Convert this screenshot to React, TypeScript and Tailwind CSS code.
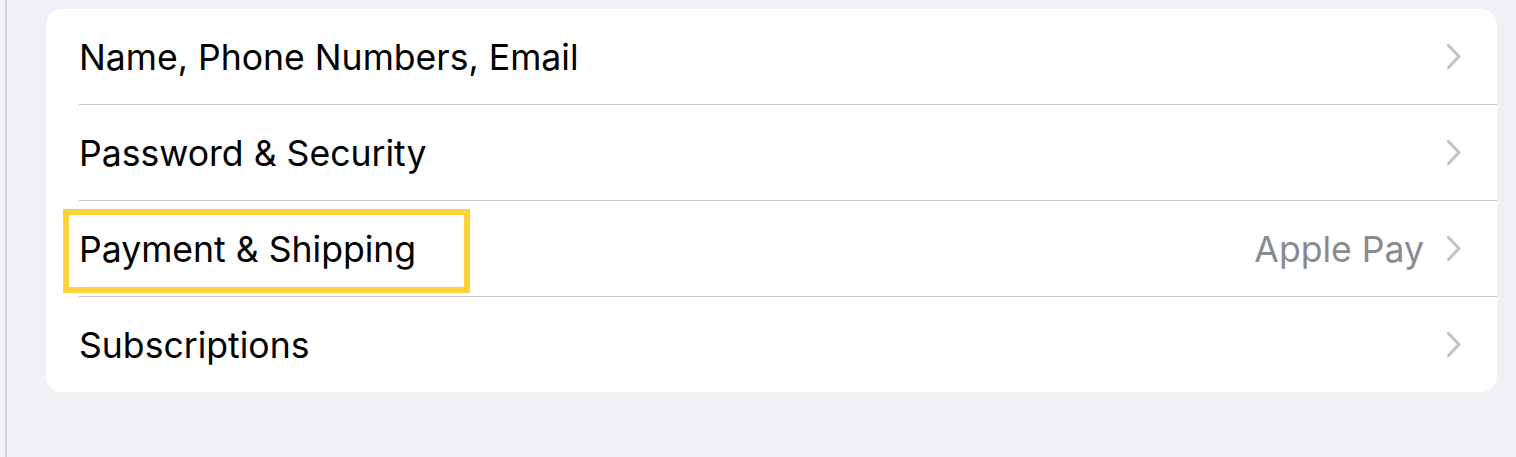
import React from "react";

function Chevron() {
  return (
    <svg width="16" height="27" viewBox="0 0 16 27" fill="none" className="shrink-0">
      <path d="M2.5 2.5 L13 13.5 L2.5 24.5" stroke="#c4c4c7" strokeWidth="3.2" strokeLinecap="round" strokeLinejoin="round" />
    </svg>
  );
}

function Row({ label, value, last, highlight }: { label: string; value?: string; last?: boolean; highlight?: boolean }) {
  return (
    <div className={`relative flex items-stretch pl-[33px] ${last ? "h-[95px]" : "h-[96px]"}`}>
      <div className={`flex flex-1 items-center pr-[35px] ${last ? "" : "border-b border-[#c8c8cc]"}`}>
        <span className="flex-1 pt-[2px] text-[35.6px] leading-none text-black">{label}</span>
        {value && <span className="mr-[22px] pt-[2px] text-[35.6px] leading-none text-[#8a8a8e]">{value}</span>}
        <Chevron />
      </div>
      {highlight && (
        <div className="pointer-events-none absolute left-[17px] top-[8px] h-[84px] w-[407px] border-[6px] border-[#fcd33b]" />
      )}
    </div>
  );
}

export default function App() {
  return (
    <div className="flex h-[457px] w-[1516px] bg-[#f0f0f5]" style={{ fontFamily: "Inter, 'Noto Sans', sans-serif" }}>
      <div className="ml-[5px] w-[2px] bg-[#d2d2d8]" />
      <div className="ml-[39px] mt-[9px] h-[383px] w-[1451px] overflow-hidden rounded-[16px] bg-white">
        <div className="flex flex-col">
          <Row label="Name, Phone Numbers, Email" />
          <Row label="Password & Security" />
          <Row label="Payment & Shipping" value="Apple Pay" highlight />
          <Row label="Subscriptions" last />
        </div>
      </div>
    </div>
  );
}
